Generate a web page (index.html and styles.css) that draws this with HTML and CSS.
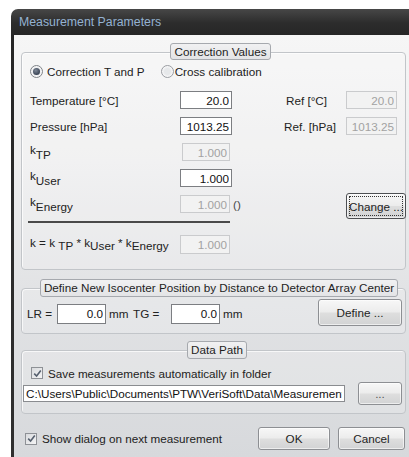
FILE: index.html
```html
<!DOCTYPE html>
<html lang="en">
<head>
<meta charset="utf-8">
<title>Measurement Parameters</title>
<link rel="stylesheet" href="styles.css">
</head>
<body>
<div class="window">
  <div class="titlebar">Measurement Parameters</div>
  <div class="client">

    <section class="group group-correction">
      <div class="group-head"><span class="legend">Correction Values</span></div>
      <div class="radio-row">
        <label class="choice"><span class="radio on"></span>Correction T and P</label>
        <label class="choice choice-cross"><span class="radio"></span>Cross calibration</label>
      </div>
      <div class="row">
        <span class="lbl">Temperature [°C]</span>
        <input class="field" type="text" value="20.0">
        <span class="ref-lbl">Ref [°C]</span>
        <input class="field off ref" type="text" value="20.0" disabled>
      </div>
      <div class="row">
        <span class="lbl">Pressure [hPa]</span>
        <input class="field" type="text" value="1013.25">
        <span class="ref-lbl ref-lbl-p">Ref. [hPa]</span>
        <input class="field off ref" type="text" value="1013.25" disabled>
      </div>
      <div class="row">
        <span class="lbl">k<span class="sub">TP</span></span>
        <input class="field off narrow" type="text" value="1.000" disabled>
      </div>
      <div class="row">
        <span class="lbl">k<span class="sub">User</span></span>
        <input class="field" type="text" value="1.000">
      </div>
      <div class="row">
        <span class="lbl">k<span class="sub">Energy</span></span>
        <input class="field off" type="text" value="1.000" disabled>
        <span class="parens">()</span>
        <button class="btn btn-change" type="button"><span class="focus">Change ...</span></button>
      </div>
      <div class="rule"></div>
      <div class="row row-product">
        <span class="lbl">k = k <span class="sub sub-s">TP</span> * k<span class="sub sub-s">User</span> * k<span class="sub sub-s">Energy</span></span>
        <input class="field off" type="text" value="1.000" disabled>
      </div>
    </section>

    <section class="group group-iso">
      <div class="group-head"><span class="legend">Define New Isocenter Position by Distance to Detector Array Center</span></div>
      <div class="iso-row">
        <span class="iso-lbl">LR =</span>
        <input class="field iso" type="text" value="0.0">
        <span class="unit">mm</span>
        <span class="iso-lbl iso-lbl-tg">TG =</span>
        <input class="field iso" type="text" value="0.0">
        <span class="unit">mm</span>
        <button class="btn btn-define" type="button">Define ...</button>
      </div>
    </section>

    <section class="group group-path">
      <div class="group-head"><span class="legend">Data Path</span></div>
      <label class="check-row">
        <span class="check">
          <svg viewBox="0 0 9 9" width="9" height="9"><path d="M1.2 4.6 L3.6 7 L7.8 1.6" fill="none" stroke="#56606e" stroke-width="1.6"/></svg>
        </span>
        Save measurements automatically in folder
      </label>
      <div class="path-row">
        <input class="field path" type="text" value="C:\Users\Public\Documents\PTW\VeriSoft\Data\Measurements">
        <button class="btn btn-browse" type="button">...</button>
      </div>
    </section>

    <div class="footer">
      <label class="check-row check-row-footer">
        <span class="check">
          <svg viewBox="0 0 9 9" width="9" height="9"><path d="M1.2 4.6 L3.6 7 L7.8 1.6" fill="none" stroke="#56606e" stroke-width="1.6"/></svg>
        </span>
        Show dialog on next measurement
      </label>
      <button class="btn btn-ok" type="button">OK</button>
      <button class="btn btn-cancel" type="button">Cancel</button>
    </div>

  </div>
</div>
</body>
</html>
```

FILE: styles.css
```css
html, body {
  margin: 0;
  height: 457px;
  overflow: hidden;
  background: #ffffff;
}

body {
  font-family: "Liberation Sans", Arial, sans-serif;
  font-size: 11.7px;
  color: #222222;
}

/* dialog frame */
.window {
  box-sizing: border-box;
  margin: 9px 0 0 11px;
  height: 448px;
  padding-left: 3px;
  display: flex;
  flex-direction: column;
  background: linear-gradient(#474747 0, #2c2c2c 14px, #262626 26px, #2f2f2f 100%);
  border-radius: 7px 0 0 0;
}

.titlebar {
  height: 26px;
  display: flex;
  align-items: center;
  padding-left: 5px;
  font-size: 12.3px;
  color: #94b2d1;
}

.client {
  flex: 1;
  padding: 17px 3px 0 7px;
  background: linear-gradient(#f6f6f6 0, #eeeeef 30%, #e2e3e5 60%, #d7d9dc 100%);
}

/* group boxes */
.group {
  border: 1px solid #c2c5c9;
  border-radius: 4px;
  box-shadow: inset 1px 1px 0 rgba(255, 255, 255, 0.7);
  background: rgba(255, 255, 255, 0.18);
}

.group-head {
  display: flex;
  justify-content: center;
  padding-left: 6px;
  margin-top: -10px;
  height: 17px;
}

.legend {
  padding: 0 3px;
  line-height: 15px;
  border: 1px solid #a6a9ae;
  border-radius: 3px;
  background: linear-gradient(#f1f1f2, #e3e4e6);
  color: #1e1e1e;
  white-space: nowrap;
}

/* correction values */
.group-correction {
  padding: 0 0 12px 8px;
}

.radio-row {
  display: flex;
  height: 16px;
  margin-top: 3px;
  align-items: center;
}

.choice {
  display: flex;
  align-items: center;
  gap: 4px;
}

.choice-cross {
  margin-left: 16px;
  gap: 1px;
}

.radio {
  box-sizing: border-box;
  width: 13px;
  height: 13px;
  border-radius: 50%;
  border: 1px solid #9a9da2;
  background: radial-gradient(circle, #e6e8ea 0, #e6e8ea 3px, #f6f6f7 5px);
  display: flex;
  align-items: center;
  justify-content: center;
}

.radio.on {
  border-color: #7f8388;
}

.radio.on::after {
  content: "";
  width: 7px;
  height: 7px;
  border-radius: 50%;
  background: radial-gradient(circle at 40% 35%, #7d8796, #3b4556 70%);
}

.row {
  display: flex;
  align-items: center;
  height: 26px;
}

.radio-row + .row {
  margin-top: 8px;
}

.lbl {
  width: 150px;
  flex: none;
  white-space: nowrap;
}

.sub {
  vertical-align: -5px;
}

.sub-s {
  vertical-align: -3px;
}

.field {
  box-sizing: border-box;
  width: 52px;
  height: 18px;
  margin: 0;
  padding: 0 2px 0 2px;
  font: inherit;
  color: #111;
  text-align: right;
  background: #ffffff;
  border: 1px solid #7c7e82;
  border-radius: 0;
  outline: none;
  -webkit-appearance: none;
  appearance: none;
}

.field.off {
  width: 50px;
  color: #a2a2a2;
  -webkit-text-fill-color: #a2a2a2;
  background: #f2f2f2;
  border-color: #cacbcd;
  opacity: 1;
}

.field.narrow {
  width: 48px;
  margin-left: 2px;
}

.ref-lbl {
  width: 60px;
  margin-left: 54px;
  white-space: nowrap;
}

.ref-lbl-p {
  margin-left: 52px;
  width: 62px;
}

.field.ref {
  width: 51px;
}

.parens {
  margin-left: 3px;
  color: #4a4a4a;
}

.rule {
  width: 202px;
  height: 2px;
  margin: 4px 0 0 -2px;
  background: #4a4a4a;
}

.row-product {
  margin-top: 8px;
}

.row-product .field {
  height: 19px;
}

/* push buttons */
.btn {
  box-sizing: border-box;
  margin: 0;
  padding: 0;
  font: inherit;
  color: #1e1e1e;
  white-space: nowrap;
  border: 1px solid #8d8f93;
  border-radius: 3px;
  background: linear-gradient(#f7f7f7 0, #ececec 48%, #dedede 52%, #d2d3d4 100%);
  box-shadow: inset 0 0 0 1px rgba(255, 255, 255, 0.6);
}

.btn-change {
  width: 60px;
  height: 26px;
  margin: 4px -1px 0 auto;
  border-color: #4d4f52;
  padding: 2px;
}

.btn-change .focus {
  display: flex;
  align-items: center;
  justify-content: center;
  height: 100%;
  outline: 1px dotted #333;
  outline-offset: -1px;
}

/* isocenter */
.group-iso {
  margin-top: 18px;
  padding: 0 0 6px 5px;
}

.group-iso .group-head {
  height: 18px;
}

.iso-row {
  display: flex;
  align-items: center;
  height: 27px;
  margin-top: 3px;
}

.iso-lbl {
  width: 30px;
  flex: none;
}

.iso-lbl-tg {
  width: 38px;
  margin-left: 4px;
}

.field.iso {
  width: 49px;
  height: 20px;
}

.unit {
  margin-left: 3px;
  width: 20px;
}

.btn-define {
  width: 84px;
  height: 27px;
  margin: -2px 3px 0 auto;
}

/* data path */
.group-path {
  margin-top: 16px;
  padding: 0 0 8px 1px;
}

.group-path .group-head {
  height: 18px;
}

.check-row {
  display: flex;
  align-items: center;
  height: 16px;
  margin-top: 6px;
  padding-left: 8px;
  gap: 5px;
  white-space: nowrap;
}

.check {
  box-sizing: border-box;
  width: 12px;
  height: 12px;
  flex: none;
  border: 1px solid #8e9196;
  background: linear-gradient(135deg, #d9dbde, #f4f4f5);
  display: flex;
  align-items: center;
  justify-content: center;
}

.path-row {
  display: flex;
  align-items: center;
  height: 23px;
  margin-top: 1px;
}

.field.path {
  width: 322px;
  height: 17px;
  text-align: left;
  padding-left: 2px;
  border-color: #8a8c90;
}

.btn-browse {
  width: 44px;
  height: 23px;
  margin-left: 13px;
  color: #555;
}

/* bottom row */
.footer {
  display: flex;
  align-items: center;
  height: 23px;
  margin-top: 13px;
}

.check-row-footer {
  margin-top: 0;
  padding-left: 4px;
}

.btn-ok {
  width: 72px;
  height: 23px;
  margin-left: auto;
}

.btn-cancel {
  width: 67px;
  height: 23px;
  margin: 0 1px 0 8px;
}
```
